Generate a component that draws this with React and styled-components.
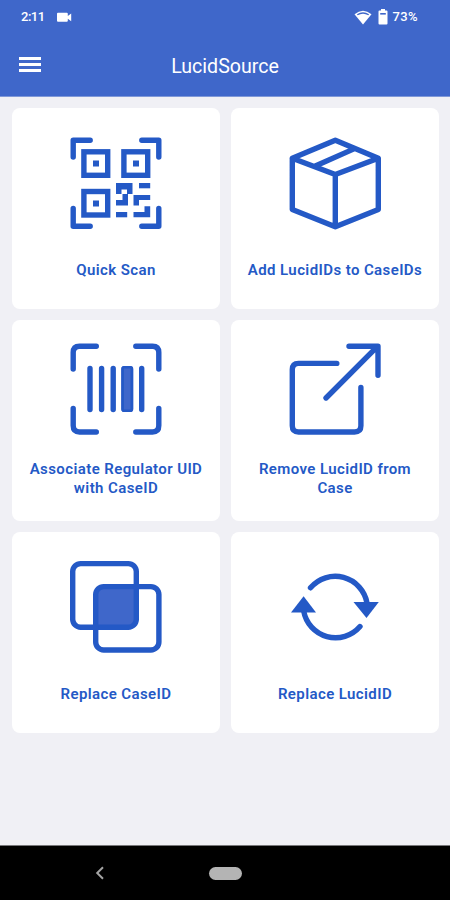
import React from 'react';
import styled, { createGlobalStyle } from 'styled-components';

const BLUE = '#3f67ca';
const STROKE = '#2459c6';

const QrIcon = () => (
  <Icon viewBox="0 0 112 110">
    <path d="M13.2 27V10.3H30.2M81.8 10.3H98.8V27M13.2 78.5V96.2H30.2M81.8 96.2H98.8V78.5" />
    <g strokeLinejoin="miter">
      <rect x="23.9" y="21.8" width="23.8" height="23.5" />
      <rect x="63.9" y="21.8" width="23.8" height="23.5" />
      <rect x="23.9" y="61.5" width="23.8" height="23.5" />
    </g>
    <g fill={STROKE} stroke="none">
      <rect x="33" y="30.5" width="6" height="6" />
      <rect x="73" y="30.5" width="6" height="6" />
      <rect x="33" y="70.5" width="6" height="6" />
      <path d="M56 53H72.5V64H68V75.5H56V70H62.5V64H67V59.5H61.5V64H56Z" />
      <rect x="79" y="53" width="11.2" height="5.3" />
      <path d="M73.5 65H90.2V70H79V75.5H73.5Z" />
      <rect x="56" y="82" width="11.2" height="5.3" />
      <path d="M73.5 82H84.5V76.3H90.2V87.3H73.5Z" />
    </g>
  </Icon>
);

const BoxIcon = () => (
  <Icon viewBox="-1 0 112 110">
    <path d="M55.3 10.3L98.3 28.2V79.5L55.3 96.8L12.3 79.5V28.2ZM12.3 28.2L55.3 44.6L98.3 28.2M55.3 44.6V96.8M35.3 36L74.5 18.6" />
  </Icon>
);

const BarcodeIcon = () => (
  <Icon viewBox="0 0 112 110">
    <path d="M13.2 34V17.5Q13.2 11.2 19.5 11.2H36.3M75.8 11.2H92.5Q98.8 11.2 98.8 17.5V34M13.2 73.5V90.5Q13.2 97 19.5 97H36.3M75.8 97H92.5Q98.8 97 98.8 90.5V73.5" />
    <path d="M30 33.5V74.5M41.6 33.5V74.5M53.2 33.5V74.5M81.7 33.5V74.5" />
    <rect x="61.3" y="31" width="12" height="46" rx="3" fill={BLUE} stroke="none" />
    <rect x="62.6" y="32.3" width="9.2" height="43.4" rx="1.5" strokeWidth="2.6" />
  </Icon>
);

const ExportIcon = () => (
  <Icon viewBox="-1 0 112 110">
    <path d="M56.8 28.4H18.5Q12.3 28.4 12.3 34.6V90.8Q12.3 97 18.5 97H74.5Q80.9 97 80.9 90.8V52.5" />
    <path d="M46 63L97.5 11.3M69 11.3H98V40.3" />
  </Icon>
);

const OverlapIcon = () => (
  <Icon viewBox="0 4 112 110">
    <rect x="36" y="36.5" width="40" height="40.5" fill={BLUE} stroke="none" rx="6" />
    <rect x="12.7" y="13.6" width="63.6" height="63.6" rx="8" />
    <rect x="35.7" y="36.6" width="63.2" height="63.4" rx="8" />
  </Icon>
);

const RefreshIcon = () => (
  <Icon viewBox="-1 4 112 110">
    <path d="M30.5 37.8A32.3 32.3 0 0 1 87 53M80 76.5A32.3 32.3 0 0 1 23.7 61" />
    <path d="M73.5 52H98.8L86.5 68Z" fill={STROKE} stroke="none" />
    <path d="M11 62.5H36L23.6 46.2Z" fill={STROKE} stroke="none" />
  </Icon>
);

const tiles = [
  { label: ['Quick Scan'], icon: QrIcon },
  { label: ['Add LucidIDs to CaseIDs'], icon: BoxIcon },
  { label: ['Associate Regulator UID', 'with CaseID'], icon: BarcodeIcon },
  { label: ['Remove LucidID from', 'Case'], icon: ExportIcon },
  { label: ['Replace CaseID'], icon: OverlapIcon },
  { label: ['Replace LucidID'], icon: RefreshIcon },
];

const App = () => (
  <>
    <GlobalStyle />
    <Screen>
      <Header>
        <StatusBar>
          <StatusGroup>
            <Clock>2:11</Clock>
            <svg width="15" height="11" viewBox="0 0 15 11" fill="#fff">
              <path d="M1 .8H9.8Q10.8.8 10.8 1.8V4L14.2 1.4V9.2L10.8 6.8V8.8Q10.8 9.8 9.8 9.8H1Q0 9.8 0 8.8V1.8Q0 .8 1 .8Z" />
            </svg>
          </StatusGroup>
          <StatusGroup>
            <svg width="18" height="15" viewBox="0 0 18 15">
              <path d="M.5 4.2Q9-2.8 17.5 4.2L9 14.5Z" fill="#fff" />
              <path d="M3.3 4.8Q9 1.2 14.7 4.8" fill="none" stroke={BLUE} strokeWidth="1.3" />
            </svg>
            <Battery width="10" height="16" viewBox="0 0 10 16">
              <path d="M3 0H7V1.5H8.5Q9.5 1.5 9.5 2.5V14.5Q9.5 15.5 8.5 15.5H1.5Q.5 15.5.5 14.5V2.5Q.5 1.5 1.5 1.5H3Z" fill="#fff" />
              <rect x="2.2" y="4" width="5.6" height="1.6" fill={BLUE} />
            </Battery>
            <Percent>73%</Percent>
          </StatusGroup>
        </StatusBar>
        <TitleBar>
          <MenuButton aria-label="Menu">
            <MenuLine />
            <MenuLine />
            <MenuLine />
          </MenuButton>
          <Title>LucidSource</Title>
        </TitleBar>
      </Header>
      <Grid>
        {tiles.map(({ label, icon: TileIcon }) => (
          <Tile key={label[0]} $wrapped={label.length > 1}>
            <TileIcon />
            <Label>
              {label.map(line => <Line key={line}>{line}</Line>)}
            </Label>
          </Tile>
        ))}
      </Grid>
      <NavBar>
        <BackIcon width="10" height="14" viewBox="0 0 10 14">
          <path d="M8 1.2L2.2 7L8 12.8" />
        </BackIcon>
        <HomePill />
      </NavBar>
    </Screen>
  </>
);

const GlobalStyle = createGlobalStyle`
  body {
    margin: 0;
    font-family: Roboto, "Liberation Sans", sans-serif;
  }

  * {
    box-sizing: border-box;
  }
`;

const Screen = styled.div`
  background-color: #f0f0f5;
  display: flex;
  flex-direction: column;
  height: 900px;
  width: 450px;
`;

const Header = styled.header`
  background-color: ${BLUE};
  border-bottom: 1px solid #7f98d8;
  color: #ffffff;
  flex: none;
  height: 97px;
`;

const StatusBar = styled.div`
  align-items: center;
  display: flex;
  height: 34px;
  justify-content: space-between;
  padding: 0 32px 0 21px;
`;

const StatusGroup = styled.div`
  align-items: center;
  display: flex;
`;

const Clock = styled.span`
  font-size: 13px;
  font-weight: 500;
  letter-spacing: -0.5px;
  line-height: 16px;
  width: 36px;
`;

const Battery = styled.svg`
  margin: 0 4px 0 6px;
`;

const Percent = styled.span`
  font-size: 13px;
  font-weight: 500;
  letter-spacing: 0.4px;
  line-height: 16px;
`;

const TitleBar = styled.div`
  align-items: center;
  display: grid;
  grid-template-columns: 22px 1fr 22px;
  height: 62px;
  padding: 0 19px 0 19px;
`;

const MenuButton = styled.button`
  background: none;
  border: 0;
  display: flex;
  flex-direction: column;
  gap: 3px;
  margin-bottom: 1px;
  padding: 0;
`;

const MenuLine = styled.span`
  background-color: #ffffff;
  height: 3px;
  width: 22px;
`;

const Title = styled.h1`
  font-size: 19.6px;
  font-weight: 400;
  line-height: 24px;
  margin: 4px 0 0;
  text-align: center;
`;

const Grid = styled.main`
  align-content: start;
  display: grid;
  flex: 1;
  gap: 11px;
  grid-auto-rows: 201px;
  grid-template-columns: 208px 208px;
  padding: 11px 11px 0 12px;
`;

const Tile = styled.section`
  align-items: center;
  background-color: #ffffff;
  border-radius: 8px;
  display: flex;
  flex-direction: column;
  gap: ${({ $wrapped }) => ($wrapped ? '15px' : '21px')};
  padding-top: ${({ $wrapped }) => ($wrapped ? '15px' : '22px')};
`;

const Icon = styled.svg`
  fill: none;
  flex: none;
  height: 110px;
  stroke: ${STROKE};
  stroke-linecap: round;
  stroke-linejoin: round;
  stroke-width: 5.4;
  width: 112px;
`;

const Label = styled.h2`
  color: ${STROKE};
  font-size: 15px;
  font-weight: 600;
  letter-spacing: 0.4px;
  line-height: 19px;
  margin: 0;
  text-align: center;
`;

const Line = styled.span`
  display: block;
  white-space: nowrap;
`;

const NavBar = styled.nav`
  align-items: center;
  background-color: #000000;
  border-top: 1px solid #77777a;
  display: flex;
  flex: none;
  gap: 104px;
  height: 55px;
  padding-left: 95px;
`;

const BackIcon = styled.svg`
  fill: none;
  stroke: #a4a4a4;
  stroke-width: 2;
`;

const HomePill = styled.span`
  background-color: #b4b4b4;
  border-radius: 7px;
  height: 13px;
  width: 33px;
`;

export default App;
